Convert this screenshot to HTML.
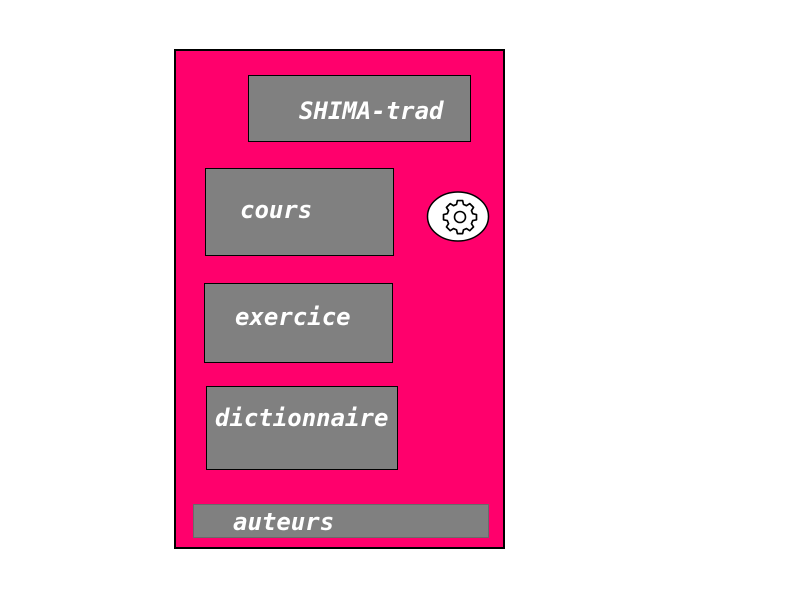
<!DOCTYPE html>
<html><head><style>
body{margin:0;width:800px;height:600px;background:#fff;position:relative;overflow:hidden}
div,span{position:absolute;box-sizing:border-box}
.o{left:174px;top:49px;width:331px;height:500px;background:#ff006c;border:2px solid #000}
.b{background:#808080;border:1px solid #000}
.t{font-family:"DejaVu Sans Mono","Liberation Mono",monospace;font-weight:bold;font-style:italic;font-size:24px;color:#fff;line-height:28px;white-space:nowrap}
</style></head><body>
<div class="o"></div>
<div class="b" style="left:248px;top:75px;width:223px;height:67px"></div>
<div class="b" style="left:205px;top:168px;width:189px;height:88px"></div>
<div class="b" style="left:204px;top:283px;width:189px;height:80px"></div>
<div class="b" style="left:206px;top:386px;width:192px;height:84px"></div>
<div class="b" style="left:193px;top:504px;width:296px;height:34px;border-color:#6a6a6a"></div>
<span class="t" style="left:299px;top:97px">SHIMA-trad</span>
<span class="t" style="left:240px;top:196px">cours</span>
<span class="t" style="left:235px;top:303px">exercice</span>
<span class="t" style="left:215px;top:404px">dictionnaire</span>
<span class="t" style="left:233px;top:508px">auteurs</span>
<svg style="position:absolute;left:426px;top:190px" width="64" height="54" viewBox="0 0 64 54">
<ellipse cx="32" cy="26.5" rx="30.5" ry="24.5" fill="#fff" stroke="#000" stroke-width="1.5"/>
<g transform="translate(34,27)" fill="none" stroke="#000" stroke-width="1.6" stroke-linejoin="round">
<path d="M-2.5,-14 L2.5,-14 L3.3,-10.4 L6.2,-9.1 L9.3,-11.1 L12.9,-7.5 L10.9,-4.4 L12.1,-1.5 L15.7,-0.7 L15.7,4.3 L12.1,5.1 L10.9,8 L12.9,11.1 L9.3,14.7 L6.2,12.7 L3.3,13.9 L2.5,17.5 L-2.5,17.5 L-3.3,13.9 L-6.2,12.7 L-9.3,14.7 L-12.9,11.1 L-10.9,8 L-12.1,5.1 L-15.7,4.3 L-15.7,-0.7 L-12.1,-1.5 L-10.9,-4.4 L-12.9,-7.5 L-9.3,-11.1 L-6.2,-9.1 L-3.3,-10.4 Z" transform="translate(0,-1.75) scale(1.05)"/>
<circle cx="0" cy="0" r="5.5"/>
</g>
</svg>
</body></html>
